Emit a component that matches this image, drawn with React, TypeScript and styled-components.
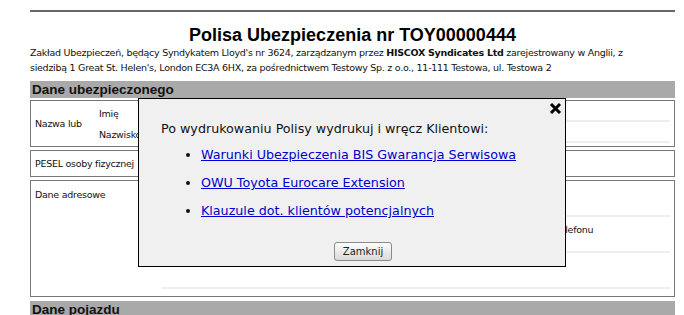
import * as React from 'react';
import styled, { createGlobalStyle } from 'styled-components';

const GlobalStyle = createGlobalStyle`
  body {
    margin: 0;
    background: #fff;
    font-family: 'DejaVu Sans', Tahoma, sans-serif;
    color: #111;
  }
`;

const Page = styled.div`
  position: relative;
  width: 645px;
  padding-left: 30px;
  height: 315px;
  overflow: hidden;
`;

const Rule = styled.div`
  margin-top: 10px;
  height: 0;
  border-top: 2px solid #666;
`;

const Title = styled.h1`
  margin: 12px 0 0;
  font: bold 18px/22px 'Liberation Sans', Arial, sans-serif;
  text-align: center;
  color: #000;
`;

const Intro = styled.p`
  margin: -1px 0 0;
  font-size: 9.5px;
  letter-spacing: -0.27px;
  line-height: 15px;
  color: #111;
`;

const SectionBar = styled.div<{ $top: number }>`
  margin-top: ${(p) => p.$top}px;
  height: 17px;
  background: #a9a9a9;
  padding-left: 2px;
  font: bold 13.5px/17px 'Liberation Sans', Arial, sans-serif;
  color: #111;
`;

const Box = styled.div<{ $height: number; $cols: number; $gap?: number }>`
  margin-top: ${(p) => p.$gap ?? 3}px;
  height: ${(p) => p.$height}px;
  box-sizing: border-box;
  border: 1px solid #777;
  display: grid;
  grid-template-columns: ${(p) => p.$cols}px 1fr;
  font-size: 9.5px;
  letter-spacing: -0.27px;
`;

const Label = styled.div<{ $center?: boolean }>`
  padding-left: 4px;
  display: flex;
  align-items: ${(p) => (p.$center ? 'center' : 'flex-start')};
  padding-top: ${(p) => (p.$center ? 0 : 8)}px;
`;

const Fields = styled.div`
  margin-right: 4px;
  display: flex;
  flex-direction: column;
`;

const NameRow = styled.div<{ $height: number }>`
  height: ${(p) => p.$height}px;
  flex: none;
  display: grid;
  grid-template-columns: 63px 1fr;
  align-items: end;
  span {
    padding-bottom: 3px;
  }
  div {
    height: 100%;
    box-sizing: border-box;
    border-bottom: 2px solid #eee;
  }
`;

const AddrRow = styled.div<{ $pad: number }>`
  height: 36px;
  flex: none;
  box-sizing: border-box;
  border-bottom: 2px solid #eee;
  display: grid;
  grid-template-columns: 381px 1fr;
  padding-top: ${(p) => p.$pad}px;
`;

const Modal = styled.div`
  position: absolute;
  left: 138px;
  top: 98px;
  width: 428px;
  height: 169px;
  box-sizing: border-box;
  border: 1px solid #000;
  background: #f0f0f0;
  padding: 22px 0 0 22px;
  font-size: 12.7px;
  color: #111;
`;

const Close = styled.button`
  position: absolute;
  top: 3px;
  right: 3px;
  width: 14px;
  height: 14px;
  padding: 0;
  border: 0;
  background: none;
  cursor: pointer;
`;

const Lead = styled.p`
  margin: 0;
  line-height: 16px;
`;

const DocList = styled.ul`
  margin: 10px 0 0;
  padding-left: 40px;
  list-style: disc;
  li {
    line-height: 16px;
    margin-bottom: 12px;
  }
  a {
    color: #0000cc;
    text-decoration: underline;
  }
`;

const Footer = styled.div`
  display: flex;
  justify-content: center;
  margin-top: 23px;
`;

const Button = styled.button`
  height: 19px;
  width: 58px;
  padding: 0;
  border: 1px solid #8a8a8a;
  border-radius: 3px;
  background: linear-gradient(#fdfdfd, #d9d9d9);
  font: 10px 'DejaVu Sans', Tahoma, sans-serif;
  color: #222;
`;

const docs = [
  'Warunki Ubezpieczenia BIS Gwarancja Serwisowa',
  'OWU Toyota Eurocare Extension',
  'Klauzule dot. klientów potencjalnych',
];

const addressRows = [
  { left: 'Ulica', right: '', pad: 7 },
  { left: 'Miejscowość', right: 'Nr telefonu', pad: 7 },
  { left: 'Kod pocztowy', right: '', pad: 3 },
];

export default function App() {
  return (
    <Page>
      <GlobalStyle />
      <Rule />
      <Title>Polisa Ubezpieczenia nr TOY00000444</Title>
      <Intro>
        Zakład Ubezpieczeń, będący Syndykatem Lloyd's nr 3624, zarządzanym przez <b>HISCOX Syndicates Ltd</b>{' '}
        zarejestrowany w Anglii, z
        <br />
        siedzibą 1 Great St. Helen's, London EC3A 6HX, za pośrednictwem Testowy Sp. z o.o., 11-111 Testowa, ul.
        Testowa 2
      </Intro>

      <SectionBar $top={6}>Dane ubezpieczonego</SectionBar>
      <Box $height={47} $cols={68} $gap={2}>
        <Label $center>Nazwa lub</Label>
        <Fields>
          <NameRow $height={21}>
            <span>Imię</span>
            <div />
          </NameRow>
          <NameRow $height={21}>
            <span>Nazwisko</span>
            <div />
          </NameRow>
        </Fields>
      </Box>
      <Box $height={27} $cols={131}>
        <Label $center>PESEL osoby fizycznej</Label>
        <Fields />
      </Box>
      <Box $height={117} $cols={131}>
        <Label>Dane adresowe</Label>
        <Fields>
          {addressRows.map((r) => (
            <AddrRow key={r.left} $pad={r.pad}>
              <span>{r.left}</span>
              <span>{r.right}</span>
            </AddrRow>
          ))}
        </Fields>
      </Box>
      <SectionBar $top={4}>Dane pojazdu</SectionBar>

      <Modal>
        <Close aria-label="Zamknij">
          <svg width="13" height="13" viewBox="0 0 13 13">
            <path d="M2 2 L11 11 M11 2 L2 11" stroke="#000" strokeWidth="3" />
          </svg>
        </Close>
        <Lead>Po wydrukowaniu Polisy wydrukuj i wręcz Klientowi:</Lead>
        <DocList>
          {docs.map((d) => (
            <li key={d}>
              <a href="#">{d}</a>
            </li>
          ))}
        </DocList>
        <Footer>
          <Button>Zamknij</Button>
        </Footer>
      </Modal>
    </Page>
  );
}
